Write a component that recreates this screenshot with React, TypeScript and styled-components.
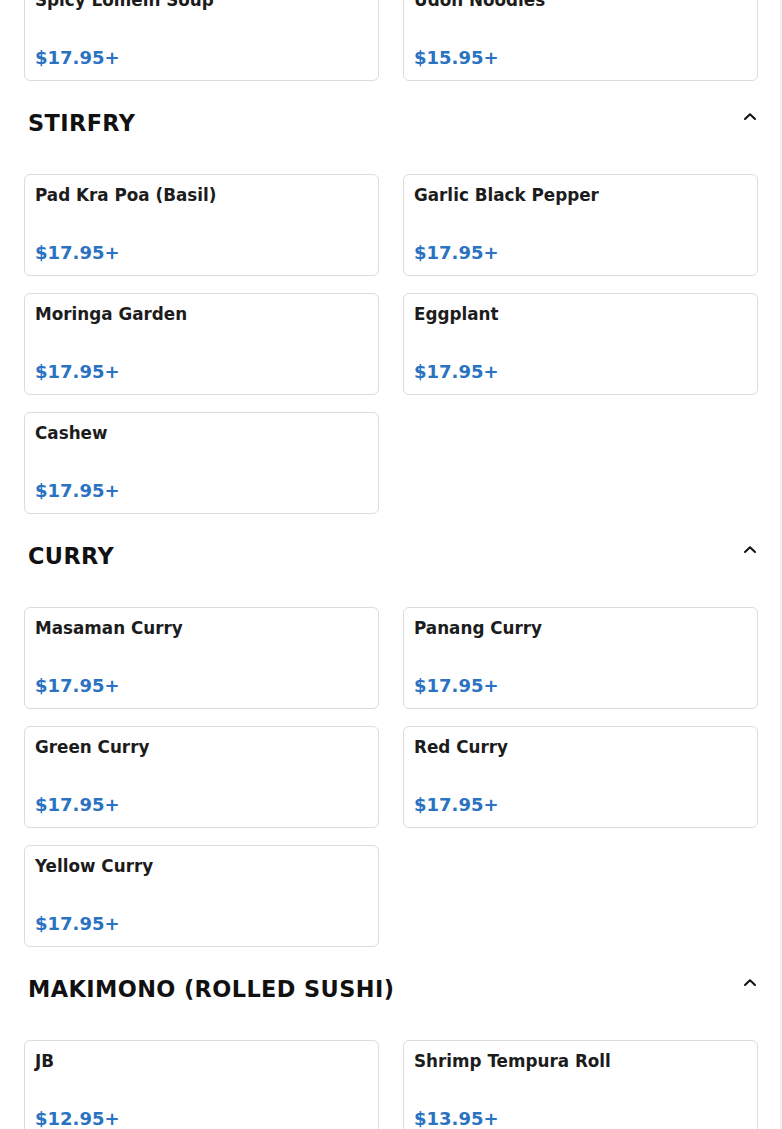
import styled, { createGlobalStyle } from 'styled-components';

const GlobalStyle = createGlobalStyle`
  body {
    margin: 0;
    background: #ffffff;
    font-family: "DejaVu Sans", "Liberation Sans", sans-serif;
  }
`;

type Item = { name: string; price: string };
type Section = { title?: string; items: Item[] };

const sections: Section[] = [
  {
    items: [
      { name: 'Spicy Lomein Soup', price: '$17.95+' },
      { name: 'Udon Noodles', price: '$15.95+' },
    ],
  },
  {
    title: 'STIRFRY',
    items: [
      { name: 'Pad Kra Poa (Basil)', price: '$17.95+' },
      { name: 'Garlic Black Pepper', price: '$17.95+' },
      { name: 'Moringa Garden', price: '$17.95+' },
      { name: 'Eggplant', price: '$17.95+' },
      { name: 'Cashew', price: '$17.95+' },
    ],
  },
  {
    title: 'CURRY',
    items: [
      { name: 'Masaman Curry', price: '$17.95+' },
      { name: 'Panang Curry', price: '$17.95+' },
      { name: 'Green Curry', price: '$17.95+' },
      { name: 'Red Curry', price: '$17.95+' },
      { name: 'Yellow Curry', price: '$17.95+' },
    ],
  },
  {
    title: 'MAKIMONO (ROLLED SUSHI)',
    items: [
      { name: 'JB', price: '$12.95+' },
      { name: 'Shrimp Tempura Roll', price: '$13.95+' },
    ],
  },
];

const Page = styled.div`
  margin-top: -21px;
  padding: 0 24px;
  box-shadow: inset -2px 0 0 #f1f1f1;
  height: 1150px;
  overflow: hidden;
`;

const Block = styled.section`
  display: flex;
  flex-direction: column;
`;

const Header = styled.div`
  display: flex;
  justify-content: space-between;
  align-items: flex-start;
  padding: 27px 0 36px 4px;
`;

const Heading = styled.h2`
  margin: 0;
  font-size: 22.4px;
  line-height: 30px;
  font-weight: 700;
  letter-spacing: 0.42px;
  color: #111;
`;

const Toggle = styled.span`
  display: flex;
  width: 16px;
  height: 16px;
  margin-top: 1px;
  color: #111;
`;

const Grid = styled.div`
  display: grid;
  grid-template-columns: 1fr 1fr;
  column-gap: 24px;
  row-gap: 17px;
`;

const Card = styled.div`
  height: 102px;
  box-sizing: border-box;
  border: 1px solid #dcdcdc;
  border-radius: 6px;
  padding: 9px 10px 10px;
  display: flex;
  flex-direction: column;
  justify-content: space-between;
  background: #fff;
`;

const Name = styled.div`
  font-size: 16.8px;
  line-height: 22px;
  font-weight: 700;
  color: #1c1c1c;
`;

const Price = styled.div`
  font-size: 18px;
  line-height: 24px;
  font-weight: 700;
  color: #2a72c2;
`;

const Chevron = () => (
  <svg width="16" height="16" viewBox="0 0 16 16" fill="none">
    <path d="M3 10 L8 5.2 L13 10" stroke="currentColor" strokeWidth="2" strokeLinecap="round" strokeLinejoin="round" />
  </svg>
);

export default function App() {
  return (
    <>
      <GlobalStyle />
      <Page>
        {sections.map((s, i) => (
          <Block key={i}>
            {s.title && (
              <Header>
                <Heading>{s.title}</Heading>
                <Toggle>
                  <Chevron />
                </Toggle>
              </Header>
            )}
            <Grid>
              {s.items.map((it) => (
                <Card key={it.name}>
                  <Name>{it.name}</Name>
                  <Price>{it.price}</Price>
                </Card>
              ))}
            </Grid>
          </Block>
        ))}
      </Page>
    </>
  );
}
